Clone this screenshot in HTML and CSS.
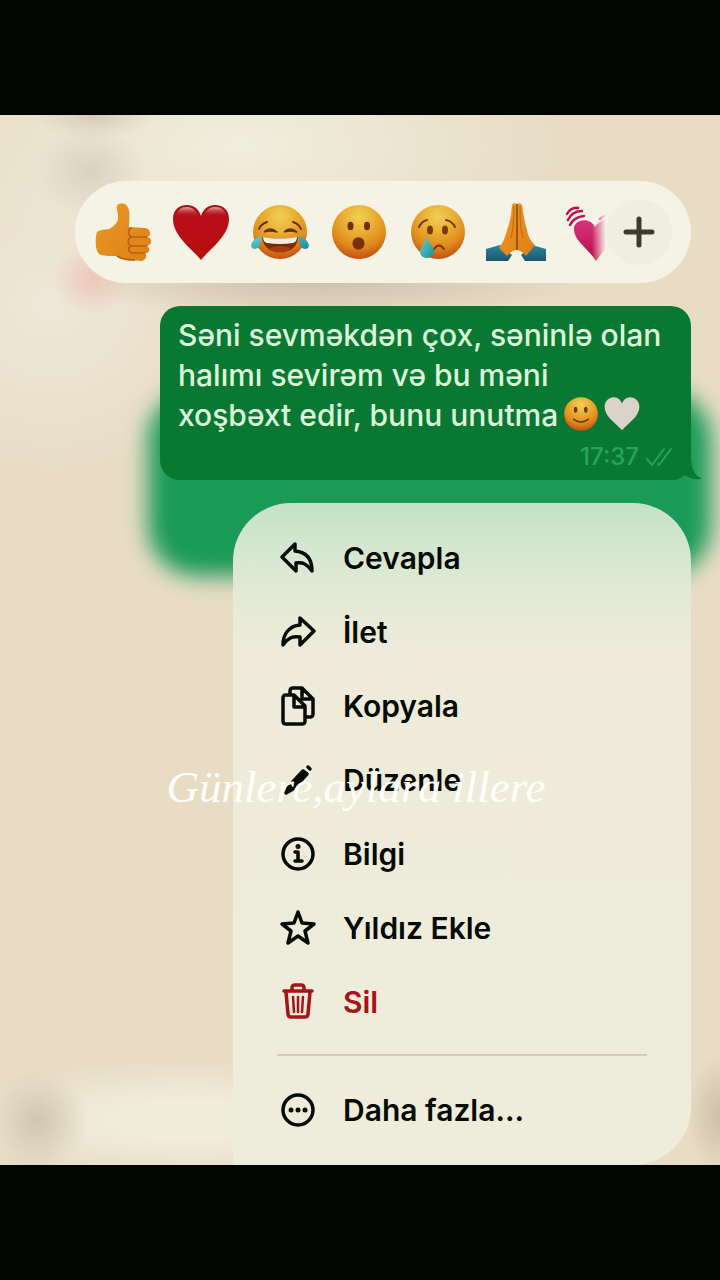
FILE: index.html
```
<!DOCTYPE html>
<html lang="tr">
<head>
    <meta charset="UTF-8">
    <meta name="viewport" content="width=device-width, initial-scale=1.0">
    <title>Mesaj</title>
    <link rel="stylesheet" href="styles.css">
</head>
<body>
    <!-- Shared emoji colours -->
    <svg class="defs" aria-hidden="true">
        <defs>
            <radialGradient id="face" cx="50%" cy="22%" r="80%">
                <stop offset="0" stop-color="#f0cf55"/>
                <stop offset="0.35" stop-color="#eab036"/>
                <stop offset="0.7" stop-color="#e08a1c"/>
                <stop offset="1" stop-color="#c04a12"/>
            </radialGradient>
            <linearGradient id="hand" x1="0" y1="0" x2="1" y2="1">
                <stop offset="0" stop-color="#e89a26"/>
                <stop offset="1" stop-color="#de7f17"/>
            </linearGradient>
            <linearGradient id="red" x1="0" y1="0" x2="0" y2="1">
                <stop offset="0" stop-color="#a80f20"/>
                <stop offset="0.3" stop-color="#ba0d18"/>
                <stop offset="1" stop-color="#b5100c"/>
            </linearGradient>
            <linearGradient id="shine" x1="0" y1="0" x2="0" y2="1">
                <stop offset="0" stop-color="#e9a79c"/>
                <stop offset="1" stop-color="#ba0d18" stop-opacity="0"/>
            </linearGradient>
            <linearGradient id="tear" x1="0" y1="0" x2="1" y2="1">
                <stop offset="0" stop-color="#6fd0cc"/>
                <stop offset="1" stop-color="#148fa0"/>
            </linearGradient>
            <linearGradient id="sleeve" x1="0" y1="0" x2="0" y2="1">
                <stop offset="0" stop-color="#2f86a0"/>
                <stop offset="1" stop-color="#1c566c"/>
            </linearGradient>
            <linearGradient id="pink" x1="0" y1="0" x2="0" y2="1">
                <stop offset="0" stop-color="#d3357f"/>
                <stop offset="1" stop-color="#bd0a49"/>
            </linearGradient>
        </defs>
    </svg>

    <main class="chat">
        <div class="reactions">
            <div class="emoji-list">
                <button type="button" aria-label="Beğen">
                    <svg viewBox="0 0 60 60">
                        <path d="M4 30C8 27 12 28 16 27C22 24 26 19 25 14C25 10 23 7 24 4C25 1 31 0 34 4C38 9 36 18 36 25L51 26C58 26 59 34 54 35C60 36 59 43 54 44C58 46 57 52 52 51C55 54 52 59 48 59L38 58C31 58 27 56 23 54C17 54 10 54 6 52C2 48 2 36 4 30Z" fill="url(#hand)"/>
                        <path d="M54 35H39C35 34 34 27 39 26M54 44H39C34 43 34 36 39 35M52 51H39C35 50 34 45 39 44M24 54C28 57 33 58 42 58" fill="none" stroke="#b95f10" stroke-width="1.6"/>
                    </svg>
                </button>
                <button type="button" aria-label="Kalp">
                    <svg viewBox="0 0 60 60">
                        <path d="M29 58C20 47 1 34 1 17C1 7 8 3 15 3C23 3 27 8 29 14C31 8 35 3 43 3C51 3 57 8 57 17C57 34 38 47 29 58Z" fill="url(#red)"/>
                        <path d="M4 15C5 8 9 5 15 5C21 5 25 9 26 15ZM32 15C33 9 37 5 43 5C49 5 54 8 54 15Z" fill="url(#shine)"/>
                    </svg>
                </button>
                <button type="button" aria-label="Gülme">
                    <svg viewBox="0 0 60 60">
                        <circle cx="29" cy="30" r="27" fill="url(#face)"/>
                        <path d="M8 27Q10 22 16 20M42 20Q48 22 50 27" fill="none" stroke="#673009" stroke-width="2" stroke-linecap="round"/>
                        <path d="M13 30Q19 24 26 30Q19 28 13 30M33 30Q39 24 46 30Q39 28 33 30" fill="#673009" stroke="#673009" stroke-width="1.6" stroke-linejoin="round"/>
                        <path d="M11 35Q29 38 47 35Q46 50 29 50Q13 50 11 35Z" fill="#7b2b08"/>
                        <path d="M12 35Q29 38 46 35Q46 40 42 41Q29 43 16 41Q12 40 12 35Z" fill="#f2eedf"/>
                        <path d="M17 47Q29 41 41 47Q29 54 17 47Z" fill="#a53c10"/>
                        <path d="M10 33C11 41 8 47 4 47C-1 47-1 42 3 38Q8 35 10 33ZM48 33C47 41 50 47 54 47C59 47 59 42 55 38Q50 35 48 33Z" fill="url(#tear)"/>
                    </svg>
                </button>
                <button type="button" aria-label="Şaşkın">
                    <svg viewBox="0 0 60 60">
                        <circle cx="29" cy="30" r="27" fill="url(#face)"/>
                        <ellipse cx="20.500" cy="24" rx="3" ry="4.200" fill="#6b3209"/>
                        <ellipse cx="37" cy="24" rx="3" ry="4.200" fill="#6b3209"/>
                        <ellipse cx="28.500" cy="41.500" rx="6" ry="6.200" fill="#7a2f08"/>
                    </svg>
                </button>
                <button type="button" aria-label="Üzgün">
                    <svg viewBox="0 0 60 60">
                        <circle cx="29" cy="30" r="27" fill="url(#face)"/>
                        <path d="M10 25Q13 19 18 18M37 18Q43 19 46 25" fill="none" stroke="#7a3b0a" stroke-width="2" stroke-linecap="round"/>
                        <ellipse cx="21" cy="28" rx="3" ry="4.500" fill="#7a3b0a"/>
                        <ellipse cx="36" cy="28" rx="3" ry="4.500" fill="#7a3b0a"/>
                        <path d="M25 47Q30 40 35 47" fill="none" stroke="#7a2f08" stroke-width="2" stroke-linecap="round"/>
                        <path d="M18 34C19 42 25 44 25 49C25 58 11 58 11 50C11 45 17 41 18 34Z" fill="url(#tear)"/>
                    </svg>
                </button>
                <button type="button" aria-label="Dua">
                    <svg viewBox="0 0 60 60">
                        <path d="M-2 47L12 43L24 53L20 59H-2ZM58 47L44 43L33 53L37 59H58Z" fill="url(#sleeve)"/>
                        <path d="M24 3Q25 0 29 2Q33 0 34 3Q36 18 39 28Q40 37 47 43L38 54Q33 48 29 48Q24 48 19 54L11 46Q17 38 19 28Q23 18 24 3Z" fill="url(#hand)"/>
                        <path d="M29 2V48" fill="none" stroke="#8f420c" stroke-width="1.500"/>
                        <path d="M26 4Q26 26 23 36M32 4Q32 26 35 36" fill="none" stroke="#c76a12" stroke-width="1.200"/>
                    </svg>
                </button>
                <button type="button" aria-label="Atan kalp">
                    <svg viewBox="0 0 60 60">
                        <path d="M29 59C21 46 6 38 7 26C8 17 23 15 28 25C33 17 44 15 48 24C50 35 38 46 29 59Z" fill="url(#pink)"/>
                        <path d="M3 23Q7 15 17 14M1 18Q5 9 15 9M0 12Q4 5 11 6M33 17Q37 13 42 13" fill="none" stroke="#bb1450" stroke-width="2.500" stroke-linecap="round"/>
                    </svg>
                </button>
            </div>
            <button type="button" class="more-emoji" aria-label="Daha fazla emoji">
                <svg viewBox="0 0 32 32">
                    <path d="M16 3V29M3 16H29" stroke="#3a3c31" stroke-width="5" stroke-linecap="round"/>
                </svg>
            </button>
        </div>

        <div class="message">
            <div class="bubble">
                <p>Səni sevməkdən çox, səninlə olan<br>halımı sevirəm və bu məni<br>xoşbəxt edir, bunu unutma<svg class="inline-emoji" viewBox="0 0 60 60" role="img" aria-label="Gülümseme">
                        <circle cx="30" cy="30" r="28" fill="url(#face)"/>
                        <ellipse cx="21" cy="23" rx="3" ry="5" fill="#743509"/>
                        <ellipse cx="38" cy="23" rx="3" ry="5" fill="#743509"/>
                        <path d="M18 39Q30 48 42 39" fill="none" stroke="#743509" stroke-width="3" stroke-linecap="round"/>
                    </svg><svg class="inline-emoji" viewBox="0 0 60 60" role="img" aria-label="Beyaz kalp">
                        <path d="M30 57C21 46 1 35 1 18C1 8 9 2 16 2C24 2 28 7 30 13C32 7 36 2 44 2C51 2 59 8 59 18C59 35 39 46 30 57Z" fill="#dcd3c8"/>
                    </svg></p>
                <div class="meta">
                    <time>17:37</time>
                    <svg class="ticks" viewBox="0 0 28 20">
                        <path d="M2 12L7 18L19 2M13 17L14 18L26 2" fill="none" stroke="currentColor" stroke-width="2" stroke-linecap="round" stroke-linejoin="round"/>
                    </svg>
                </div>
                <svg class="tail" viewBox="0 0 28 34">
                    <path d="M0 34Q6 33 10 29Q18 34 28 33Q18 29 17 14V0H0Z" fill="#097833"/>
                </svg>
            </div>
        </div>

        <div class="menu">
            <button type="button" class="menu-item">
                <svg viewBox="0 0 36 36"><path d="M2 17L15 4V11C26 12 32 19 32 31C27 24 23 22 16 23V31Z"/></svg>
                <span>Cevapla</span>
            </button>
            <button type="button" class="menu-item">
                <svg viewBox="0 0 36 36"><path d="M34 17L20 4V11C9 12 3 20 3 31C8 24 12 22 20 23V31Z"/></svg>
                <span>İlet</span>
            </button>
            <button type="button" class="menu-item">
                <svg viewBox="0 0 36 36"><path d="M10 7V3Q10 0 13 0H22L33 11V26Q33 29 30 29H27M22 1V11H32M6 7H14L25 18V33Q25 36 22 36H6Q3 36 3 33V10Q3 7 6 7ZM14 8V19H25"/></svg>
                <span>Kopyala</span>
            </button>
            <button type="button" class="menu-item">
                <svg viewBox="0 0 36 36"><path d="M6 31L9 24L23 9L27 12L13 27Z" fill="currentColor"/><path d="M28 5L30 7"/></svg>
                <span>Düzenle</span>
            </button>
            <button type="button" class="menu-item">
                <svg viewBox="0 0 36 36"><circle cx="18" cy="18" r="15"/><path d="M15 16H18V25M15 25H22"/><circle class="dot" cx="18" cy="10.500" r="2.500"/></svg>
                <span>Bilgi</span>
            </button>
            <button type="button" class="menu-item">
                <svg viewBox="0 0 36 36"><path d="M18 2L22 13L34 14L25 21L28 33L18 26L8 33L11 21L2 14L14 13Z"/></svg>
                <span>Yıldız Ekle</span>
            </button>
            <button type="button" class="menu-item delete">
                <svg viewBox="0 0 36 36"><path d="M4 7H32M12 7V4Q12 1 15 1H21Q24 1 24 4V7M6 8L8 30Q8 33 11 33H25Q28 33 28 30L30 8"/><path class="thin" d="M13 13L14 28M18 13V28M23 13L22 28"/></svg>
                <span>Sil</span>
            </button>
            <hr>
            <button type="button" class="menu-item">
                <svg viewBox="0 0 36 36"><circle cx="18" cy="18" r="15"/><circle class="dot" cx="11" cy="18" r="2.500"/><circle class="dot" cx="18" cy="18" r="2.500"/><circle class="dot" cx="25" cy="18" r="2.500"/></svg>
                <span>Daha fazla...</span>
            </button>
        </div>

        <p class="caption">Günlere,aylara illere</p>
    </main>
</body>
</html>
```
FILE: styles.css
```
* {
    box-sizing: border-box;
}
body {
    margin: 0;
    min-height: 100vh;
    display: flex;
    flex-direction: column;
    justify-content: center;
    background-color: #010603;
    font-family: Inter, "Noto Sans", sans-serif;
}
button {
    border: none;
    background: none;
    padding: 0;
    font: inherit;
    color: inherit;
    cursor: pointer;
}
svg {
    display: block;
    overflow: visible;
}
.defs {
    position: absolute;
    width: 0;
    height: 0;
}
.chat {
    position: relative;
    overflow: hidden;
    padding: 66px 29px 0 75px;
    display: flex;
    flex-direction: column;
    gap: 23px;
    background-color: #e8dcc5;
    background-image:
        radial-gradient(ellipse 60px 24px at 95px 0, #d3cbb8, transparent),
        radial-gradient(ellipse 56px 46px at 90px 56px, #dad2c0, transparent),
        radial-gradient(ellipse 40px 36px at 92px 164px, #ecc8bb, transparent),
        radial-gradient(ellipse 260px 34px at 320px 168px, #cfc2ad, transparent),
        radial-gradient(ellipse 50px 50px at 38px 1006px, #d0c5af, transparent),
        radial-gradient(ellipse 34px 60px at 100% 1000px, #cdbfa8, transparent),
        radial-gradient(ellipse 320px 140px at 240px 30px, #f0eedd, transparent),
        radial-gradient(ellipse 190px 170px at 50px 190px, #efe8d8, transparent),
        radial-gradient(ellipse 240px 60px at 190px 1005px, #f1eddb 30%, transparent);
}

/* Reactions */
.reactions {
    display: flex;
    align-items: center;
    height: 102px;
    padding: 0 19px 0 18px;
    border-radius: 51px;
    background-color: #f5f3e5;
}
.emoji-list {
    flex: 1;
    min-width: 0;
    display: flex;
    gap: 19px;
    overflow: hidden;
    mask-image: linear-gradient(to left, transparent, #000 14px);
}
.emoji-list button {
    flex: none;
}
.emoji-list svg {
    width: 60px;
    height: 60px;
}
.more-emoji {
    flex: none;
    display: flex;
    align-items: center;
    justify-content: center;
    width: 66px;
    height: 66px;
    border-radius: 50%;
    background-color: #f0eee0;
}
.more-emoji svg {
    width: 32px;
    height: 32px;
}

/* Message */
.message {
    position: relative;
    margin-left: 85px;
}
.message::before {
    content: "";
    position: absolute;
    top: 84px;
    right: -20px;
    bottom: -96px;
    left: -12px;
    border-radius: 50px;
    background-color: #1a9a57;
    filter: blur(11px);
}
.bubble {
    position: relative;
    height: 174px;
    padding: 9px 18px 8px;
    border-radius: 20px;
    background-color: #097833;
    color: #dcf6d9;
}
.bubble p {
    margin: 0;
    font-size: 30px;
    font-weight: 500;
    line-height: 40px;
    white-space: nowrap;
}
.inline-emoji {
    display: inline-block;
    width: 36px;
    height: 36px;
    margin-left: 5px;
    vertical-align: -6px;
}
.meta {
    display: flex;
    align-items: center;
    justify-content: flex-end;
    gap: 6px;
    margin-top: 10px;
    font-size: 24px;
    font-weight: 500;
    line-height: 24px;
    color: #27a45c;
}
.ticks {
    width: 28px;
    height: 20px;
}
.tail {
    position: absolute;
    right: -11px;
    bottom: 0;
    width: 28px;
    height: 34px;
}

/* Menu */
.menu {
    position: relative;
    display: flex;
    flex-direction: column;
    margin-left: 158px;
    padding: 18px 0;
    border-radius: 58px 58px 58px 0;
    background: linear-gradient(#c3e2c7, #d2e6cf 40px, #e2ead5 90px, #eeebda 150px, #eeecda);
    color: #060c05;
}
.menu-item {
    display: flex;
    align-items: center;
    gap: 27px;
    height: 74px;
    padding: 0 47px;
    font-size: 30px;
    font-weight: 600;
    text-align: left;
}
.menu-item svg {
    flex: none;
    width: 36px;
    height: 36px;
    fill: none;
    stroke: currentColor;
    stroke-width: 3.5;
    stroke-linecap: round;
    stroke-linejoin: round;
}
.menu-item .dot {
    fill: currentColor;
    stroke: none;
}
.menu-item .thin {
    stroke-width: 2.5;
}
.delete {
    color: #a81218;
}
.menu hr {
    width: auto;
    height: 2px;
    margin: 15px 44px 17px;
    border: none;
    background-color: #d3cbb8;
}

.caption {
    position: absolute;
    top: 644px;
    left: 0;
    right: 8px;
    margin: 0;
    font-family: "Liberation Serif", serif;
    font-style: italic;
    font-size: 45px;
    line-height: 56px;
    text-align: center;
    color: #fffef8;
    pointer-events: none;
}
```
